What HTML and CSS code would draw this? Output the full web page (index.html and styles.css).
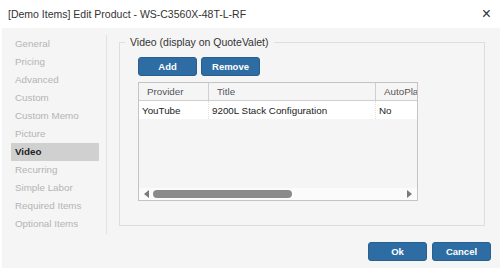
FILE: index.html
```html
<!DOCTYPE html>
<html lang="en">
<head>
    <meta charset="UTF-8">
    <meta name="viewport" content="width=device-width, initial-scale=1.0">
    <title>Edit Product</title>
    <link rel="stylesheet" href="styles.css">
</head>
<body>
    <div class="dialog">
        <div class="titlebar">
            <span class="title">[Demo Items] Edit Product - WS-C3560X-48T-L-RF</span>
            <span class="close">&times;</span>
        </div>
        <div class="content">
            <div class="panes">
                <ul class="tabs">
                    <li>General</li>
                    <li>Pricing</li>
                    <li>Advanced</li>
                    <li>Custom</li>
                    <li>Custom Memo</li>
                    <li>Picture</li>
                    <li class="active">Video</li>
                    <li>Recurring</li>
                    <li>Simple Labor</li>
                    <li>Required Items</li>
                    <li>Optional Items</li>
                </ul>
                <fieldset class="group">
                    <legend>Video (display on QuoteValet)</legend>
                    <div class="toolbar">
                        <button class="btn">Add</button>
                        <button class="btn">Remove</button>
                    </div>
                    <div class="grid">
                        <div class="grid-body">
                            <table>
                                <thead>
                                    <tr>
                                        <th class="col-provider">Provider</th>
                                        <th class="col-title">Title</th>
                                        <th class="col-auto">AutoPlay</th>
                                    </tr>
                                </thead>
                                <tbody>
                                    <tr>
                                        <td>YouTube</td>
                                        <td>9200L Stack Configuration</td>
                                        <td>No</td>
                                    </tr>
                                </tbody>
                            </table>
                        </div>
                        <div class="hscroll">
                            <span class="arrow-left"></span>
                            <span class="thumb"></span>
                            <span class="arrow-right"></span>
                        </div>
                    </div>
                </fieldset>
            </div>
            <div class="footer">
                <button class="btn">Ok</button>
                <button class="btn">Cancel</button>
            </div>
        </div>
    </div>
</body>
</html>
```

FILE: styles.css
```css
body {
    margin: 0;
    font-family: "Liberation Sans", Arial, sans-serif;
    background-color: #fff;
}

.dialog {
    width: 500px;
    height: 272px;
}

.titlebar {
    height: 28px;
    display: flex;
    align-items: center;
    justify-content: space-between;
    padding: 0 9px 0 8px;
    font-size: 10.5px;
    color: #333;
}

.close {
    font-size: 16px;
    color: #333;
}

.content {
    margin-left: 2px;
    height: 240px;
    background-color: #f5f5f5;
    display: flex;
    flex-direction: column;
}

.panes {
    flex: 1;
    display: flex;
    align-items: flex-start;
}

.tabs {
    list-style: none;
    margin: 7px 0 0 9px;
    padding: 0 7px 0 0;
    width: 88px;
    height: 199px;
    border-right: 1px solid #e2e2e2;
}

.tabs li {
    height: 18px;
    line-height: 18px;
    padding-left: 4px;
    font-size: 9.8px;
    color: #b4b4b4;
}

.tabs li.active {
    background-color: #d0d0d0;
    color: #222;
    font-weight: bold;
}

.group {
    box-sizing: border-box;
    margin: 8px 0 0 12px;
    padding: 0 0 0 18px;
    width: 366px;
    height: 190px;
    border: 1px solid #dedede;
}

.group legend {
    padding: 0 5px;
    margin-left: -13px;
    font-size: 10.5px;
    color: #333;
}

.toolbar {
    display: flex;
    gap: 4px;
    margin-top: 9px;
}

.btn {
    width: 59px;
    height: 19px;
    padding: 0;
    background-color: #2e6da4;
    border: 1px solid #285f8f;
    border-radius: 3px;
    color: #fff;
    font-family: "Liberation Sans", Arial, sans-serif;
    font-size: 9.5px;
    font-weight: bold;
}

.grid {
    box-sizing: border-box;
    margin-top: 6px;
    width: 280px;
    height: 119px;
    border: 1px solid #c4c4c4;
    display: flex;
    flex-direction: column;
    overflow: hidden;
}

.grid-body {
    flex: 1;
    overflow: hidden;
}

.grid table {
    border-collapse: collapse;
    width: 400px;
    table-layout: fixed;
    font-size: 9.8px;
}

.grid th {
    height: 17px;
    padding: 0 0 0 8px;
    text-align: left;
    font-weight: normal;
    color: #555;
    border-right: 1px solid #cfcfcf;
    border-bottom: 1px solid #cfcfcf;
}

.grid td {
    height: 18px;
    padding: 0 0 0 3px;
    color: #222;
    background-color: #fff;
    border-right: 1px dotted #e0e0e0;
}

.col-provider {
    width: 61px;
}

.col-title {
    width: 158px;
}

.col-auto {
    width: 160px;
}

.hscroll {
    height: 12px;
    background-color: #fbfbfb;
    display: flex;
    align-items: center;
}

.arrow-left {
    margin-left: 5px;
    border-top: 4px solid transparent;
    border-bottom: 4px solid transparent;
    border-right: 5px solid #7a7a7a;
}

.thumb {
    margin-left: 4px;
    width: 139px;
    height: 8px;
    border-radius: 4px;
    background-color: #8a8a8a;
}

.arrow-right {
    margin-left: auto;
    margin-right: 5px;
    border-top: 4px solid transparent;
    border-bottom: 4px solid transparent;
    border-left: 5px solid #7a7a7a;
}

.footer {
    display: flex;
    justify-content: flex-end;
    gap: 5px;
    padding: 0 9px 7px 0;
}
```
